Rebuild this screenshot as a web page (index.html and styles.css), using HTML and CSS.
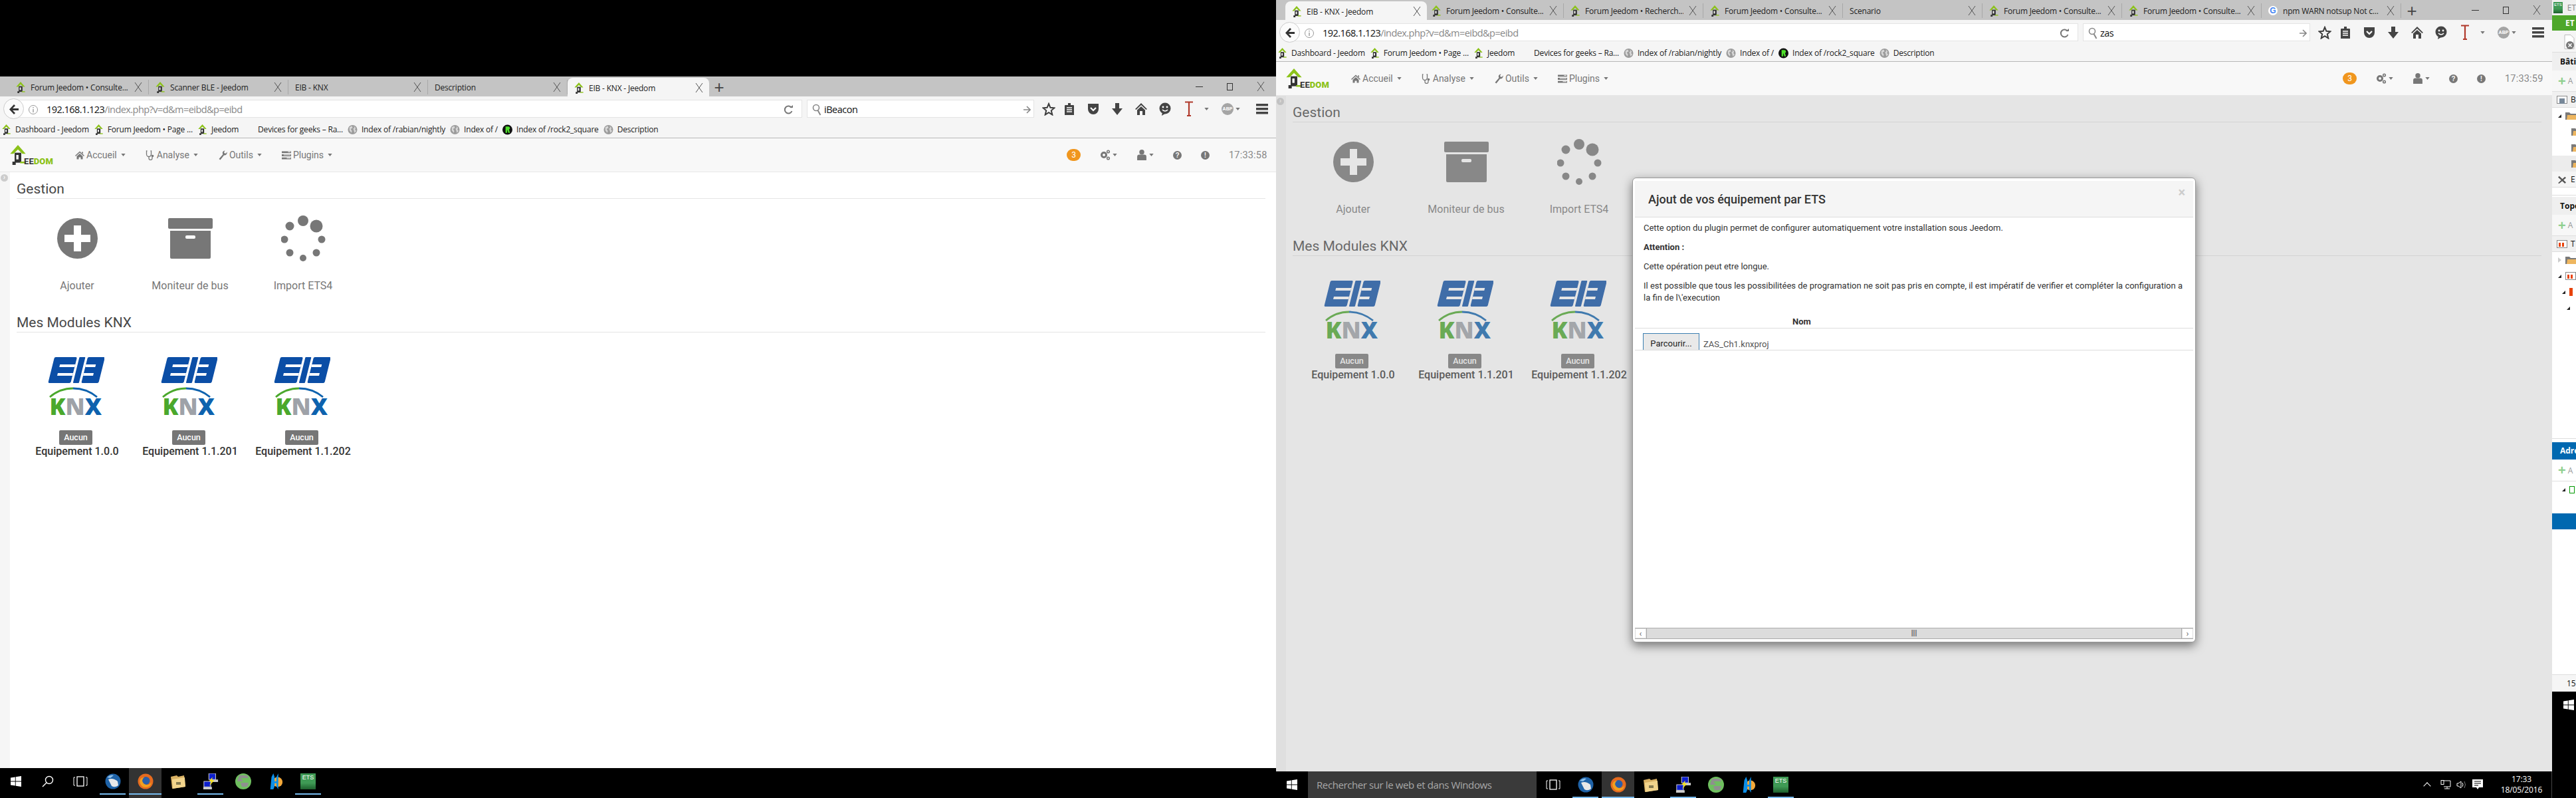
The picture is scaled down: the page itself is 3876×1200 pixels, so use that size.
FILE: index.html
```html
<!DOCTYPE html>
<html lang="fr">
<head>
<meta charset="utf-8">
<title>Jeedom EIB KNX</title>
<link rel="stylesheet" href="styles.css">
</head>
<body>
<svg class="sprite" aria-hidden="true">
  <symbol id="jee" viewBox="0 0 14 18"><path d="M4 7h6v9H4z" fill="#333"/><path d="M2 15h3v3H2z" fill="#333"/><path d="M7 0l7 8h-3L7 4 3 8H0z" fill="#8cc21a"/><path d="M5.500 9h2v4h-2z" fill="#fff"/><path d="M9 15h5v1.500H9z" fill="#8cc21a"/></symbol>
  <symbol id="x" viewBox="0 0 12 18"><path d="M1 2l10 14M11 2L1 16" stroke="#555" stroke-width="1" fill="none"/></symbol>
  <symbol id="globe" viewBox="0 0 16 16"><circle cx="8" cy="8" r="7.500" fill="#9c9c9c"/><path d="M3 4l4-2 1 3-3 2 2 3-1 3-3-4zM10 2l3 3-1 3 2 2-3 3-1-4-1-3 2-1z" fill="#d8d8d8"/></symbol>
  <symbol id="rock" viewBox="0 0 16 16"><circle cx="8" cy="8" r="8" fill="#111"/><path d="M5 3h4.500a2.500 2.500 0 0 1 1 4.800L12 13H9.500L8 8.500H7.500V13H5z" fill="#4ee02a"/></symbol>
  <symbol id="plus" viewBox="0 0 61 61"><circle cx="30.500" cy="30.500" r="30.500" fill="currentColor"/><path d="M25 11h11v14h14v11H36v14H25V36H11V25h14z" fill="#fff"/></symbol>
  <symbol id="box" viewBox="0 0 67 61"><rect width="67" height="16" rx="2" fill="currentColor"/><path d="M3 19h61v40a2 2 0 0 1-2 2H5a2 2 0 0 1-2-2z" fill="currentColor"/><rect x="26" y="26" width="15" height="5" rx="2" fill="#fff"/></symbol>
  <symbol id="spin" viewBox="0 0 67 69"><g fill="currentColor"><circle cx="33" cy="8" r="8"/><ellipse cx="53" cy="16" rx="9.500" ry="9.500"/><circle cx="13" cy="16" r="6.500"/><circle cx="5" cy="36" r="5.500"/><circle cx="61" cy="36" r="5.500"/><circle cx="13" cy="56" r="5.500"/><circle cx="53" cy="56" r="5.500"/><circle cx="33" cy="64" r="5"/></g></symbol>
  <symbol id="eib" viewBox="0 0 85 61">
    <g transform="translate(10 0) skewX(-14)">
      <rect width="34" height="39" rx="2" fill="#0b4ea6"/><rect x="11" y="11" width="23" height="4" fill="#fff"/><rect x="11" y="24" width="23" height="4" fill="#fff"/>
      <rect x="37.500" width="9" height="39" rx="1" fill="#0b4ea6"/>
      <rect x="50" width="26" height="39" rx="2" fill="#0b4ea6"/><rect x="50" y="11" width="15" height="4" fill="#fff"/><rect x="50" y="24" width="15" height="4" fill="#fff"/>
    </g>
    <path d="M3 60Q18 47 38 47" stroke="#4aa82c" stroke-width="2.800" fill="none"/>
    <path d="M38 47Q58 47 74 60" stroke="#0d62ae" stroke-width="2.800" fill="none"/>
  </symbol>
  <symbol id="nhome" viewBox="0 0 14 12"><path d="M7 0l7 6.500-1 1L7 2 1 7.500l-1-1zM2.500 7.500L7 3.500l4.500 4V12h-3V9h-3v3h-3zM10 1h2v3l-2-2z" fill="#777"/></symbol>
  <symbol id="nsteth" viewBox="0 0 13 15"><path d="M2 1H1v5a3.500 3.500 0 0 0 7 0V1H7M4.500 9.500V12a2.500 2.500 0 0 0 5 0v-2" stroke="#777" stroke-width="1.300" fill="none"/><circle cx="10" cy="8.500" r="1.800" fill="#777"/></symbol>
  <symbol id="nwrench" viewBox="0 0 13 15"><path d="M1 13l6-7a3.500 3.500 0 0 1 3-5.500L8.500 3l1 1.800 2.200-.3L13 2.500A4 4 0 0 1 8.500 7.500L3 14.500z" fill="#777"/></symbol>
  <symbol id="nlist" viewBox="0 0 15 15"><path d="M0 1h15v3H0zM0 6h15v3H0zM0 11h15v3H0z" fill="#777"/><path d="M10 2h4M3 7h11M8 12h6" stroke="#fff" stroke-width="1"/></symbol>
  <symbol id="ngears" viewBox="0 0 15 16"><circle cx="5.500" cy="8" r="3.500" fill="none" stroke="#777" stroke-width="3"/><circle cx="12" cy="3" r="1.800" fill="none" stroke="#777" stroke-width="1.600"/><circle cx="12" cy="13" r="1.800" fill="none" stroke="#777" stroke-width="1.600"/></symbol>
  <symbol id="nuser" viewBox="0 0 13 15"><circle cx="6.500" cy="3.500" r="3.500" fill="#777"/><path d="M0 15V10q0-3 3-3h7q3 0 3 3v5z" fill="#777"/></symbol>
  <symbol id="star" viewBox="0 0 20 20"><path d="M10 2l2.400 5.800 6.100.5-4.700 4 1.500 6.200L10 15.200l-5.300 3.300 1.500-6.200-4.700-4 6.100-.5z" fill="none" stroke="#3c3c3c" stroke-width="2"/></symbol>
  <symbol id="clip" viewBox="0 0 16 20"><path d="M2 4h4V1h4v3h4a1 1 0 0 1 1 1v14H1V5a1 1 0 0 1 1-1z" fill="#444"/><path d="M4 8h8M4 11h8M4 14h8" stroke="#fff" stroke-width="1.400"/></symbol>
  <symbol id="pocket" viewBox="0 0 18 18"><path d="M1 1h16v8a8 8 0 0 1-16 0z" fill="#444"/><path d="M5 7l4 4 4-4" stroke="#fff" stroke-width="2.200" fill="none"/></symbol>
  <symbol id="down" viewBox="0 0 16 18"><path d="M5 0h6v8h5l-8 10L0 8h5z" fill="#444"/></symbol>
  <symbol id="home" viewBox="0 0 18 18"><path d="M9 0l9 9-1.500 1L9 3 1.500 10 0 9z" fill="#444"/><path d="M9 5l6 5.500V18h-4v-6H7v6H3v-7.500z" fill="#444"/></symbol>
  <symbol id="smile" viewBox="0 0 18 20"><circle cx="9" cy="9" r="8.500" fill="#444"/><circle cx="6" cy="7" r="1.400" fill="#fff"/><circle cx="12" cy="7" r="1.400" fill="#fff"/><path d="M5 11q4 4 8 0" stroke="#fff" stroke-width="1.500" fill="none"/><path d="M5 15l-1 5 5-3z" fill="#444"/></symbol>
  <symbol id="tee" viewBox="0 0 14 24"><path d="M1 1.500h12M7 1v21M4 22h6" stroke="#b0392b" stroke-width="2.200" fill="none"/></symbol>
  <symbol id="caret" viewBox="0 0 8 5"><path d="M0 0h8L4 5z" fill="currentColor"/></symbol>
  <symbol id="burger" viewBox="0 0 18 16"><path d="M0 0h18v3.500H0zM0 6h18v3.500H0zM0 12h18v3.500H0z" fill="#444"/></symbol>
  <symbol id="back" viewBox="0 0 16 16"><path d="M8 1l2 2-4 4h9v3H6l4 4-2 2-7-7.500z" fill="#333"/></symbol>
  <symbol id="info" viewBox="0 0 14 16"><circle cx="7" cy="8" r="6.500" fill="none" stroke="#999"/><path d="M7 4v1.500M7 7v5" stroke="#999" stroke-width="1.400"/></symbol>
  <symbol id="reload" viewBox="0 0 14 16"><path d="M12 5a5.500 5.500 0 1 0 .5 5" stroke="#777" stroke-width="2" fill="none"/><path d="M9 5h5V1z" fill="#777"/></symbol>
  <symbol id="mag" viewBox="0 0 14 18"><circle cx="6" cy="6" r="4.500" fill="none" stroke="#888" stroke-width="1.600"/><path d="M8.500 10l4 7" stroke="#888" stroke-width="2"/></symbol>
  <symbol id="go" viewBox="0 0 12 14"><path d="M1 7h9M6 2l5 5-5 5" stroke="#888" stroke-width="1.600" fill="none"/></symbol>
  <symbol id="win" viewBox="0 0 16 16"><path d="M0 2.500l6.800-1v6H0zM7.700 1.300L16 0v7.500H7.700zM0 8.500h6.800v6l-6.800-1zM7.700 8.500H16V16l-8.300-1.300z" fill="#fff"/></symbol>
  <symbol id="lens" viewBox="0 0 18 18"><circle cx="11" cy="7" r="5.500" fill="none" stroke="#fff" stroke-width="1.400"/><path d="M7 11l-6 6" stroke="#fff" stroke-width="1.400"/></symbol>
  <symbol id="views" viewBox="0 0 22 16"><rect x="6" y="1" width="10" height="14" fill="none" stroke="#fff" stroke-width="1.300"/><path d="M3 2H1v12h2M19 2h2v12h-2" fill="none" stroke="#fff" stroke-width="1"/></symbol>
  <symbol id="tbird" viewBox="0 0 24 24"><circle cx="12" cy="12" r="11.500" fill="#1f63a8"/><path d="M5 9q7-3 14 3l1 6q-5 4-10 1z" fill="#e8e8e8"/><path d="M3 6q5-5 10-3l-5 4z" fill="#8fc0ea"/></symbol>
  <symbol id="fox" viewBox="0 0 24 24"><circle cx="12" cy="12" r="11.500" fill="#e66b1f"/><circle cx="12.500" cy="11" r="6" fill="#2a5ea8"/><path d="M3 12q2 9 9 9 8 0 9-8-3 5-8 4-5-1-6-6 0-3 3-5-6 0-7 6z" fill="#f0a020"/></symbol>
  <symbol id="folder" viewBox="0 0 24 22"><path d="M1 4l9-2 2 2 9-2 2 17-20 3z" fill="#d9b163"/><path d="M3 8l19-3 1 14-19 3z" fill="#f2d48c"/><rect x="9" y="12" width="7" height="4" fill="#857a50"/></symbol>
  <symbol id="putty" viewBox="0 0 24 26"><rect x="9" y="0" width="11" height="10" fill="#0d1fcc" stroke="#ddd"/><rect x="12" y="10" width="12" height="4" fill="#ccc"/><rect x="1" y="13" width="11" height="9" fill="#0d1fcc" stroke="#ddd"/><rect x="0" y="22" width="14" height="4" fill="#ccc"/><path d="M15 6l-6 7h4l-3 7 8-9h-4z" fill="#f4e11c"/></symbol>
  <symbol id="gworld" viewBox="0 0 24 24"><circle cx="12" cy="12" r="12" fill="#6fbf5f"/><path d="M6 3h12l2 4H8l4 5H3zM8 14h12l-2 6H10z" fill="#8f8f8f"/></symbol>
  <symbol id="hicon" viewBox="0 0 24 26"><circle cx="15" cy="14" r="8" fill="#f4a93a"/><path d="M3 26L5 6l3-6 2 6v7h3V6l3-6v26l-3-5v-5h-3v5l-2 5z" fill="#0d8fe8"/></symbol>
  <symbol id="net" viewBox="0 0 16 14"><path d="M5 1h10v9H5M10 10v3M6 13h8" fill="none" stroke="#fff"/><rect x="1" y="0.500" width="4" height="6" fill="#000" stroke="#fff"/></symbol>
  <symbol id="vol" viewBox="0 0 16 14"><path d="M1 5v4h2l4 3V2L3 5z" fill="none" stroke="#fff"/><path d="M9 4q2 3 0 6" fill="none" stroke="#fff"/><path d="M12 2q3 5 0 10" fill="none" stroke="#777"/></symbol>
  <symbol id="notif" viewBox="0 0 16 16"><path d="M0 0h16v12H10l-2 3-2-3H0z" fill="#fff"/><path d="M3 3h10M3 6h10M3 9h6" stroke="#000"/></symbol>
  <symbol id="doc" viewBox="0 0 16 22"><path d="M1 .500h9l5 5v16H1z" fill="#fff" stroke="#bbb"/><circle cx="9" cy="16" r="6" fill="#777"/><path d="M6.500 13.500l5 5M11.500 13.500l-5 5" stroke="#fff" stroke-width="1.500"/></symbol>
  <symbol id="fold" viewBox="0 0 16 12"><path d="M0 1h6l2 2h8v9H0z" fill="#7a7a7a"/><path d="M2 12l1-7h13v7z" fill="#eeb65f"/></symbol>
  <symbol id="bld" viewBox="0 0 16 12"><rect x=".5" y=".5" width="15" height="11" fill="#fff" stroke="#888"/><rect x="4" y="4" width="8" height="8" fill="#789"/></symbol>
  <symbol id="topo" viewBox="0 0 16 12"><rect x=".5" y=".5" width="15" height="11" fill="#fff" stroke="#888"/><rect x="3" y="4" width="3" height="6" fill="#e8430c"/><rect x="8" y="4" width="3" height="6" fill="#e8430c"/></symbol>
  <symbol id="tools" viewBox="0 0 16 14"><path d="M1 13L13 2l2 2L3 14zM1 3l2-2 12 11-2 2z" fill="#555"/></symbol>
</svg>

<main class="desktop">

  <!-- LEFT SCREEN -->
  <div class="screen screen-left">
    <section class="window">
      <div class="tabstrip">
        <div class="tab"><svg class="fav"><use href="#jee"/></svg><span class="tab-t">Forum Jeedom • Consulte...</span><svg class="tab-x"><use href="#x"/></svg></div>
        <div class="tab"><svg class="fav"><use href="#jee"/></svg><span class="tab-t">Scanner BLE - Jeedom</span><svg class="tab-x"><use href="#x"/></svg></div>
        <div class="tab"><span class="tab-t">EIB - KNX</span><svg class="tab-x"><use href="#x"/></svg></div>
        <div class="tab"><span class="tab-t">Description</span><svg class="tab-x"><use href="#x"/></svg></div>
        <div class="tab tab-on"><svg class="fav"><use href="#jee"/></svg><span class="tab-t">EIB - KNX - Jeedom</span><svg class="tab-x"><use href="#x"/></svg></div>
        <span class="tab-new">+</span>
        <div class="winctl"><span class="wc-min"></span><span class="wc-max"></span><svg class="wc-x"><use href="#x"/></svg></div>
      </div>
      <div class="toolbar">
        <span class="back"><svg class="i16"><use href="#back"/></svg></span>
        <div class="urlbar"><svg class="u-info"><use href="#info"/></svg><span class="u-host">192.168.1.123</span><span class="u-path">/index.php?v=d&amp;m=eibd&amp;p=eibd</span><svg class="u-reload"><use href="#reload"/></svg></div>
        <div class="searchbar"><svg class="s-mag"><use href="#mag"/></svg><span class="s-text">iBeacon</span><svg class="s-go"><use href="#go"/></svg></div>
        <span class="ti ti-star"><svg class="i20"><use href="#star"/></svg></span>
        <span class="ti ti-clip"><svg class="i20"><use href="#clip"/></svg></span>
        <span class="ti ti-36"><svg class="i18"><use href="#pocket"/></svg></span>
        <span class="ti ti-36"><svg class="i18"><use href="#down"/></svg></span>
        <span class="ti ti-36"><svg class="i18"><use href="#home"/></svg></span>
        <span class="ti ti-36"><svg class="i18h"><use href="#smile"/></svg></span>
        <span class="ti ti-36"><svg class="i24"><use href="#tee"/></svg></span>
        <span class="ti ti-drop"><svg class="car"><use href="#caret"/></svg></span>
        <span class="ti ti-abp"><span class="abp">ABP</span></span>
        <span class="ti ti-abpc"><svg class="car"><use href="#caret"/></svg></span>
        <span class="ti ti-menu"><svg class="i18"><use href="#burger"/></svg></span>
      </div>
      <div class="bookmarks">
        <span class="bm"><svg class="fav"><use href="#jee"/></svg>Dashboard - Jeedom</span>
        <span class="bm"><svg class="fav"><use href="#jee"/></svg>Forum Jeedom • Page ...</span>
        <span class="bm"><svg class="fav"><use href="#jee"/></svg>Jeedom</span>
        <span class="bm bm-noicon">Devices for geeks – Ra...</span>
        <span class="bm"><svg class="fav"><use href="#globe"/></svg>Index of /rabian/nightly</span>
        <span class="bm"><svg class="fav"><use href="#globe"/></svg>Index of /</span>
        <span class="bm"><svg class="fav"><use href="#rock"/></svg>Index of /rock2_square</span>
        <span class="bm"><svg class="fav"><use href="#globe"/></svg>Description</span>
      </div>
      <nav class="jnav">
        <div class="jlogo"><svg class="jhouse"><use href="#jee"/></svg><span class="jword">EE<b>DOM</b></span></div>
        <span class="ni"><svg class="ni-i"><use href="#nhome"/></svg>Accueil<svg class="car"><use href="#caret"/></svg></span>
        <span class="ni"><svg class="ni-i"><use href="#nsteth"/></svg>Analyse<svg class="car"><use href="#caret"/></svg></span>
        <span class="ni"><svg class="ni-i"><use href="#nwrench"/></svg>Outils<svg class="car"><use href="#caret"/></svg></span>
        <span class="ni"><svg class="ni-i"><use href="#nlist"/></svg>Plugins<svg class="car"><use href="#caret"/></svg></span>
        <div class="nright">
          <span class="nbadge">3</span>
          <span class="ni ni-s"><svg class="ni-i"><use href="#ngears"/></svg><svg class="car"><use href="#caret"/></svg></span>
          <span class="ni ni-s"><svg class="ni-i"><use href="#nuser"/></svg><svg class="car"><use href="#caret"/></svg></span>
          <span class="nround">?</span>
          <span class="nround">!</span>
          <span class="ntime">17:33:58</span>
        </div>
      </nav>
      <div class="content">
        <aside class="side"><span class="side-dot">›</span></aside>
        <div class="main">
          <h2 class="legend legend-1">Gestion</h2>
          <div class="cards cards-act">
            <div class="card"><div class="act-i"><svg class="ic-plus"><use href="#plus"/></svg></div><div class="act-l">Ajouter</div></div>
            <div class="card"><div class="act-i"><svg class="ic-box"><use href="#box"/></svg></div><div class="act-l">Moniteur de bus</div></div>
            <div class="card"><div class="act-i"><svg class="ic-spin"><use href="#spin"/></svg></div><div class="act-l">Import ETS4</div></div>
          </div>
          <h2 class="legend legend-2">Mes Modules KNX</h2>
          <div class="cards cards-eq">
            <div class="card"><svg class="ic-eib"><use href="#eib"/></svg><div class="knx"><span class="k1">K</span><span class="k2">N</span><span class="k3">X</span></div><span class="eq-b">Aucun</span><div class="eq-n">Equipement 1.0.0</div></div>
            <div class="card"><svg class="ic-eib"><use href="#eib"/></svg><div class="knx"><span class="k1">K</span><span class="k2">N</span><span class="k3">X</span></div><span class="eq-b">Aucun</span><div class="eq-n">Equipement 1.1.201</div></div>
            <div class="card"><svg class="ic-eib"><use href="#eib"/></svg><div class="knx"><span class="k1">K</span><span class="k2">N</span><span class="k3">X</span></div><span class="eq-b">Aucun</span><div class="eq-n">Equipement 1.1.202</div></div>
          </div>
        </div>
      </div>
    </section>
    <footer class="taskbar tb-left">
      <span class="slot slot-48"><svg class="i16"><use href="#win"/></svg></span>
      <span class="slot slot-48"><svg class="i18"><use href="#lens"/></svg></span>
      <span class="slot"><svg class="i22"><use href="#views"/></svg></span>
      <span class="slot slot-run"><svg class="i24"><use href="#tbird"/></svg></span>
      <span class="slot slot-run slot-on"><svg class="i24"><use href="#fox"/></svg></span>
      <span class="slot"><svg class="i24"><use href="#folder"/></svg></span>
      <span class="slot slot-run"><svg class="i24"><use href="#putty"/></svg></span>
      <span class="slot"><svg class="i24"><use href="#gworld"/></svg></span>
      <span class="slot"><svg class="i24"><use href="#hicon"/></svg></span>
      <span class="slot slot-run"><span class="ets-ic">ETS</span></span>
    </footer>
  </div>

  <!-- RIGHT SCREEN -->
  <div class="screen screen-right">
    <section class="window">
      <div class="tabstrip">
        <div class="tab tab-on"><svg class="fav"><use href="#jee"/></svg><span class="tab-t">EIB - KNX - Jeedom</span><svg class="tab-x"><use href="#x"/></svg></div>
        <div class="tab"><svg class="fav"><use href="#jee"/></svg><span class="tab-t">Forum Jeedom • Consulte...</span><svg class="tab-x"><use href="#x"/></svg></div>
        <div class="tab"><svg class="fav"><use href="#jee"/></svg><span class="tab-t">Forum Jeedom • Recherch...</span><svg class="tab-x"><use href="#x"/></svg></div>
        <div class="tab"><svg class="fav"><use href="#jee"/></svg><span class="tab-t">Forum Jeedom • Consulte...</span><svg class="tab-x"><use href="#x"/></svg></div>
        <div class="tab"><span class="tab-t">Scenario</span><svg class="tab-x"><use href="#x"/></svg></div>
        <div class="tab"><svg class="fav"><use href="#jee"/></svg><span class="tab-t">Forum Jeedom • Consulte...</span><svg class="tab-x"><use href="#x"/></svg></div>
        <div class="tab"><svg class="fav"><use href="#jee"/></svg><span class="tab-t">Forum Jeedom • Consulte...</span><svg class="tab-x"><use href="#x"/></svg></div>
        <div class="tab"><span class="gfav">G</span><span class="tab-t">npm WARN notsup Not c...</span><svg class="tab-x"><use href="#x"/></svg></div>
        <span class="tab-new">+</span>
        <div class="winctl"><span class="wc-min"></span><span class="wc-max"></span><svg class="wc-x"><use href="#x"/></svg></div>
      </div>
      <div class="toolbar">
        <span class="back"><svg class="i16"><use href="#back"/></svg></span>
        <div class="urlbar"><svg class="u-info"><use href="#info"/></svg><span class="u-host">192.168.1.123</span><span class="u-path">/index.php?v=d&amp;m=eibd&amp;p=eibd</span><svg class="u-reload"><use href="#reload"/></svg></div>
        <div class="searchbar"><svg class="s-mag"><use href="#mag"/></svg><span class="s-text">zas</span><svg class="s-go"><use href="#go"/></svg></div>
        <span class="ti ti-star"><svg class="i20"><use href="#star"/></svg></span>
        <span class="ti ti-clip"><svg class="i20"><use href="#clip"/></svg></span>
        <span class="ti ti-36"><svg class="i18"><use href="#pocket"/></svg></span>
        <span class="ti ti-36"><svg class="i18"><use href="#down"/></svg></span>
        <span class="ti ti-36"><svg class="i18"><use href="#home"/></svg></span>
        <span class="ti ti-36"><svg class="i18h"><use href="#smile"/></svg></span>
        <span class="ti ti-36"><svg class="i24"><use href="#tee"/></svg></span>
        <span class="ti ti-drop"><svg class="car"><use href="#caret"/></svg></span>
        <span class="ti ti-abp"><span class="abp">ABP</span></span>
        <span class="ti ti-abpc"><svg class="car"><use href="#caret"/></svg></span>
        <span class="ti ti-menu"><svg class="i18"><use href="#burger"/></svg></span>
      </div>
      <div class="bookmarks">
        <span class="bm"><svg class="fav"><use href="#jee"/></svg>Dashboard - Jeedom</span>
        <span class="bm"><svg class="fav"><use href="#jee"/></svg>Forum Jeedom • Page ...</span>
        <span class="bm"><svg class="fav"><use href="#jee"/></svg>Jeedom</span>
        <span class="bm bm-noicon">Devices for geeks – Ra...</span>
        <span class="bm"><svg class="fav"><use href="#globe"/></svg>Index of /rabian/nightly</span>
        <span class="bm"><svg class="fav"><use href="#globe"/></svg>Index of /</span>
        <span class="bm"><svg class="fav"><use href="#rock"/></svg>Index of /rock2_square</span>
        <span class="bm"><svg class="fav"><use href="#globe"/></svg>Description</span>
      </div>
      <nav class="jnav">
        <div class="jlogo"><svg class="jhouse"><use href="#jee"/></svg><span class="jword">EE<b>DOM</b></span></div>
        <span class="ni"><svg class="ni-i"><use href="#nhome"/></svg>Accueil<svg class="car"><use href="#caret"/></svg></span>
        <span class="ni"><svg class="ni-i"><use href="#nsteth"/></svg>Analyse<svg class="car"><use href="#caret"/></svg></span>
        <span class="ni"><svg class="ni-i"><use href="#nwrench"/></svg>Outils<svg class="car"><use href="#caret"/></svg></span>
        <span class="ni"><svg class="ni-i"><use href="#nlist"/></svg>Plugins<svg class="car"><use href="#caret"/></svg></span>
        <div class="nright">
          <span class="nbadge">3</span>
          <span class="ni ni-s"><svg class="ni-i"><use href="#ngears"/></svg><svg class="car"><use href="#caret"/></svg></span>
          <span class="ni ni-s"><svg class="ni-i"><use href="#nuser"/></svg><svg class="car"><use href="#caret"/></svg></span>
          <span class="nround">?</span>
          <span class="nround">!</span>
          <span class="ntime">17:33:59</span>
        </div>
      </nav>
      <div class="content">
        <aside class="side"><span class="side-dot">›</span></aside>
        <div class="main">
          <h2 class="legend legend-1">Gestion</h2>
          <div class="cards cards-act">
            <div class="card"><div class="act-i"><svg class="ic-plus"><use href="#plus"/></svg></div><div class="act-l">Ajouter</div></div>
            <div class="card"><div class="act-i"><svg class="ic-box"><use href="#box"/></svg></div><div class="act-l">Moniteur de bus</div></div>
            <div class="card"><div class="act-i"><svg class="ic-spin"><use href="#spin"/></svg></div><div class="act-l">Import ETS4</div></div>
          </div>
          <h2 class="legend legend-2">Mes Modules KNX</h2>
          <div class="cards cards-eq">
            <div class="card"><svg class="ic-eib"><use href="#eib"/></svg><div class="knx"><span class="k1">K</span><span class="k2">N</span><span class="k3">X</span></div><span class="eq-b">Aucun</span><div class="eq-n">Equipement 1.0.0</div></div>
            <div class="card"><svg class="ic-eib"><use href="#eib"/></svg><div class="knx"><span class="k1">K</span><span class="k2">N</span><span class="k3">X</span></div><span class="eq-b">Aucun</span><div class="eq-n">Equipement 1.1.201</div></div>
            <div class="card"><svg class="ic-eib"><use href="#eib"/></svg><div class="knx"><span class="k1">K</span><span class="k2">N</span><span class="k3">X</span></div><span class="eq-b">Aucun</span><div class="eq-n">Equipement 1.1.202</div></div>
          </div>
        </div>
        <div class="dim"></div>
      </div>
      <div class="modal">
        <header class="m-head"><h3 class="m-title">Ajout de vos équipement par ETS</h3><span class="m-close">×</span></header>
        <div class="m-body">
          <p class="m-p">Cette option du plugin permet de configurer automatiquement votre installation sous Jeedom.</p>
          <p class="m-p"><b>Attention :</b></p>
          <p class="m-p">Cette opération peut etre longue.</p>
          <p class="m-p">Il est possible que tous les possibilitées de programation ne soit pas pris en compte, il est impératif de verifier et compléter la configuration a la fin de l\'execution</p>
        </div>
        <div class="m-th"><span class="m-nom">Nom</span></div>
        <div class="m-row"><span class="m-file">Parcourir...</span><span class="m-fname">ZAS_Ch1.knxproj</span></div>
        <div class="m-fill"></div>
        <div class="m-scroll"><span class="m-sb">‹</span><span class="m-track">|||</span><span class="m-sb">›</span></div>
      </div>
    </section>
    <footer class="taskbar tb-right">
      <span class="slot slot-48"><svg class="i16"><use href="#win"/></svg></span>
      <span class="tsearch">Rechercher sur le web et dans Windows</span>
      <span class="slot"><svg class="i22"><use href="#views"/></svg></span>
      <span class="slot slot-run"><svg class="i24"><use href="#tbird"/></svg></span>
      <span class="slot slot-run slot-on"><svg class="i24"><use href="#fox"/></svg></span>
      <span class="slot"><svg class="i24"><use href="#folder"/></svg></span>
      <span class="slot slot-run"><svg class="i24"><use href="#putty"/></svg></span>
      <span class="slot"><svg class="i24"><use href="#gworld"/></svg></span>
      <span class="slot"><svg class="i24"><use href="#hicon"/></svg></span>
      <span class="slot slot-run"><span class="ets-ic">ETS</span></span>
      <div class="tray">
        <span class="tray-up"></span>
        <svg class="i16"><use href="#net"/></svg>
        <svg class="i16"><use href="#vol"/></svg>
        <svg class="i16"><use href="#notif"/></svg>
        <span class="clock">17:33<br>18/05/2016</span>
      </div>
    </footer>
  </div>

  <!-- THIRD SCREEN, CUT OFF -->
  <div class="screen screen-third">
    <section class="ets">
      <div class="et-title"><span class="ets-ic ets-ic-s">ETS</span><span>ET</span></div>
      <div class="et-green">ET</div>
      <div class="et-tool"><svg class="et-doc"><use href="#doc"/></svg></div>
      <div class="et-band">Bâti</div>
      <div class="et-add"><span class="et-plus">+</span><span>A</span></div>
      <div class="et-col"><svg class="et-i"><use href="#bld"/></svg><span>B</span></div>
      <div class="et-tree et-tree-1">
        <div class="et-node"><span class="et-arr"></span><svg class="et-f"><use href="#fold"/></svg></div>
        <div class="et-node et-n2"><svg class="et-f"><use href="#fold"/></svg></div>
        <div class="et-node et-n2"><svg class="et-f"><use href="#fold"/></svg></div>
        <div class="et-node et-n2 et-sel"><svg class="et-f"><use href="#fold"/></svg></div>
      </div>
      <div class="et-col et-col-e"><svg class="et-i"><use href="#tools"/></svg><span>E</span></div>
      <div class="et-gap"></div>
      <div class="et-band et-band-2">Topo</div>
      <div class="et-add"><span class="et-plus">+</span><span>A</span></div>
      <div class="et-col"><svg class="et-i"><use href="#topo"/></svg><span>T</span></div>
      <div class="et-tree et-tree-2">
        <div class="et-node"><span class="et-arr et-arr-o"></span><svg class="et-f"><use href="#fold"/></svg></div>
        <div class="et-node"><span class="et-arr"></span><svg class="et-f"><use href="#topo"/></svg></div>
        <div class="et-node et-n3"><span class="et-arr"></span><span class="et-bar"></span></div>
        <div class="et-node et-n4"><span class="et-arr"></span></div>
      </div>
      <div class="et-blue">Adre</div>
      <div class="et-add et-add-w"><span class="et-plus">+</span><span>A</span></div>
      <div class="et-tree et-tree-3"><div class="et-node et-n3"><span class="et-arr"></span><span class="et-grp"></span></div></div>
      <div class="et-blue et-blue-2"></div>
      <div class="et-rest"></div>
      <div class="et-status">15.</div>
    </section>
    <footer class="taskbar tb-third"><svg class="i16"><use href="#win"/></svg></footer>
  </div>
</main>
</body>
</html>
```

FILE: styles.css
```css
* { box-sizing: border-box; }
html, body { margin: 0; height: 100%; background: #000; overflow: hidden; }
.sprite { position: absolute; width: 0; height: 0; }
svg { display: block; flex: none; }

.desktop { display: flex; width: 3876px; height: 1200px; font-family: "Roboto", sans-serif; }
.screen { display: flex; flex-direction: column; flex: none; height: 1200px; }
.screen-left { width: 1920px; padding-top: 115px; }
.screen-right { width: 1920px; }
.screen-third { width: 36px; overflow: hidden; }

/* window */
.window { position: relative; flex: 1; display: flex; flex-direction: column; background: #fff; min-height: 0; }

/* tabs */
.tabstrip { display: flex; align-items: flex-end; height: 30px; padding-left: 14px; background: #c4c4c4; font: 12px "Open Sans", sans-serif; color: #222; }
.tab { display: flex; align-items: center; flex: none; width: 210px; height: 22px; margin-bottom: 3px; padding: 0 9px 0 10px; border-right: 1px solid #a8a8a8; gap: 8px; }
.tab-on { height: 28px; margin: 0 -1px 0 0; padding-top: 2px; width: 213px; background: #f5f5f5; border: 0; border-radius: 8px 8px 0 0; }
.tab-on + .tab { margin-left: -2px; width: 209px; }
.fav { width: 14px; height: 17px; }
.bm .fav { width: 15px; height: 16px; }
.tab-t { flex: 1; min-width: 0; white-space: nowrap; overflow: hidden; letter-spacing: -.2px; }
.tab-x { width: 12px; height: 18px; }
.gfav { display: block; flex: none; width: 14px; height: 14px; border-radius: 50%; background: #fff; color: #4285f4; font: bold 12px/14px "Liberation Sans", sans-serif; text-align: center; }
.tab-new { flex: none; width: 32px; height: 26px; font: 26px/24px "Liberation Sans", sans-serif; color: #444; text-align: center; }
.winctl { display: flex; align-items: center; margin-left: auto; height: 30px; padding-right: 17px; gap: 36px; }
.wc-min { width: 11px; height: 1px; background: #333; }
.wc-max { width: 9px; height: 11px; border: 1px solid #333; }
.wc-x { width: 12px; height: 18px; }

/* toolbar */
.toolbar { position: relative; display: flex; align-items: center; height: 33px; padding: 5px 3px 1px 5px; background: #f5f5f5; }
.back { position: relative; z-index: 1; display: flex; align-items: center; justify-content: center; flex: none; width: 31px; height: 31px; margin-right: -15px; border-radius: 50%; border: 1px solid #ccc; background: #fbfbfb; }
.i16 { width: 16px; height: 16px; }
.i18 { width: 18px; height: 18px; }
.i18h { width: 18px; height: 20px; }
.i20 { width: 20px; height: 20px; }
.i22 { width: 22px; height: 16px; }
.i24 { width: 24px; height: 24px; }
.urlbar { display: flex; align-items: center; flex: 1; height: 27px; padding: 2px 13px 0 21px; background: #fff; border: 1px solid #e4e4e4; font: 14.500px "Open Sans", sans-serif; letter-spacing: -.55px; }
.u-info { width: 14px; height: 16px; margin-right: 13px; }
.u-host { color: #111; }
.u-path { color: #888; }
.u-reload { width: 14px; height: 16px; margin-left: auto; }
.searchbar { display: flex; align-items: center; flex: none; width: 342px; height: 27px; margin-left: 7px; padding: 2px 4px 0 7px; background: #fff; border: 1px solid #e4e4e4; font: 14.500px "Open Sans", sans-serif; letter-spacing: -.5px; color: #111; }
.s-mag { width: 14px; height: 18px; margin-right: 4px; }
.s-go { width: 12px; height: 14px; margin-left: auto; }
.ti { display: flex; align-items: center; justify-content: center; flex: none; height: 28px; color: #444; }
.ti-star { width: 30px; margin-left: 7px; }
.ti-clip { width: 32px; }
.ti-36 { width: 36px; }
.ti-clip + .ti-36 { margin-left: 2px; }
.ti-drop { width: 16px; }
.ti-abp { width: 24px; margin-left: 12px; }
.ti-abpc { width: 7px; }
.ti-menu { width: 36px; margin-left: 15px; }
.abp { display: block; width: 18px; height: 18px; border-radius: 50%; background: #a5a5a5; color: #fff; font: bold 7px/18px "Liberation Sans", sans-serif; text-align: center; }
.car { width: 7px; height: 4px; color: #777; }

/* bookmarks */
.bookmarks { display: flex; align-items: center; gap: 7px; height: 30px; padding: 4px 0 0 2px; background: #f5f5f5; border-bottom: 1px solid #b8b8b8; font: 12px "Open Sans", sans-serif; color: #222; letter-spacing: -.2px; white-space: nowrap; }
.bm { display: flex; align-items: center; gap: 6px; }
.bm-noicon { margin-left: 22px; }

/* jeedom navbar */
.jnav { display: flex; align-items: center; gap: 30px; height: 51px; padding: 0 15px; background: #f8f8f8; border-bottom: 1px solid #e7e7e7; font-size: 14px; color: #777; }
.jlogo { display: flex; align-items: flex-end; width: 69px; height: 30px; margin-right: -1px; }
.jhouse { width: 24px; height: 30px; }
.jword { margin-left: -3px; font-weight: 700; font-size: 13px; line-height: 11px; color: #333; letter-spacing: .1px; }
.jword b { color: #8cc21a; }
.ni { display: inline-flex; align-items: center; gap: 3px; }
.ni .car { margin-left: 3px; }
.ni-i { width: 14px; height: 15px; }
.ni-s { gap: 0; }
.ni-s .ni-i { width: 16px; height: 16px; }
.nright { display: flex; align-items: center; gap: 29px; margin-left: auto; }
.nbadge { width: 21px; height: 18px; border-radius: 10px; background: #f0961e; color: #fff; font-size: 12px; line-height: 18px; text-align: center; }
.nround { width: 13px; height: 13px; border-radius: 50%; background: #777; color: #f8f8f8; font: bold 10px/13px "Liberation Sans", sans-serif; text-align: center; }
.ntime { width: 56px; font-size: 14.500px; letter-spacing: .2px; color: #888; text-align: right; white-space: nowrap; }

/* content */
.content { position: relative; flex: 1; display: flex; min-height: 0; }
.side { flex: none; width: 15px; background: #f6f6f6; }
.side-dot { display: block; width: 11px; height: 11px; margin: 3px 0 0 1px; border-radius: 50%; background: #ccc; color: #f6f6f6; font: bold 10px/10px "Liberation Sans", sans-serif; text-align: center; }
.main { flex: 1; padding: 0 16px 0 10px; color: #333; }
.legend { margin: 0; font-weight: 400; font-size: 21px; line-height: 25px; color: #484848; border-bottom: 1px solid #e5e5e5; }
.legend-1 { height: 40px; padding-top: 13px; }
.legend-2 { height: 58px; padding-top: 31px; }
.cards { display: flex; padding-left: 6px; }
.card { display: flex; flex-direction: column; align-items: center; flex: none; width: 170px; }
.cards-act { padding-top: 24px; color: #777; }
.act-i { display: flex; align-items: center; justify-content: center; width: 100%; height: 70px; }
.ic-plus { width: 61px; height: 61px; }
.ic-box { width: 67px; height: 61px; }
.ic-spin { width: 67px; height: 69px; }
.act-l { height: 24px; margin-top: 25px; font-size: 16px; line-height: 24px; color: #777; white-space: nowrap; }
.cards-eq { padding-top: 37px; }
.ic-eib { width: 85px; height: 61px; margin-left: -4px; }
.knx { display: flex; justify-content: space-between; width: 73px; height: 25px; margin-left: -10px; font: 800 35px/25px "Open Sans", sans-serif; }
.k1 { color: #4aa82c; }
.k2 { color: #9ea2a8; }
.k3 { color: #0d62ae; }
.eq-b { width: 50px; height: 22px; margin: 24px 0 0 -4px; border-radius: 2px; background: #767676; color: #fff; font-size: 12.500px; font-weight: 500; line-height: 22px; text-align: center; }
.eq-n { height: 20px; font-size: 16px; font-weight: 500; line-height: 20px; color: #333; white-space: nowrap; }
.dim { position: absolute; inset: 0; background: rgba(173,173,173,.32); }

/* modal */
.modal { position: absolute; top: 267px; left: 536px; display: flex; flex-direction: column; width: 848px; height: 699px; padding: 4px 3px 4px; background: #fff; border: 1px solid #999; border-radius: 6px; box-shadow: 0 5px 15px rgba(0,0,0,.5); font-size: 13px; color: #333; }
.m-head { display: flex; align-items: center; justify-content: space-between; flex: none; height: 55px; padding: 0 12px 0 20px; background: #f5f5f5; border-bottom: 1px solid #ddd; }
.m-title { margin: 0; font-size: 18px; font-weight: 500; color: #333; }
.m-close { margin-top: -20px; font-size: 20px; font-weight: 700; color: #ccc; }
.m-body { flex: none; height: 148px; padding: 7px 13px 0; line-height: 18px; }
.m-p { margin: 0 0 11px; }
.m-th { flex: none; height: 19px; border-bottom: 1px solid #ddd; font-weight: 700; line-height: 17px; }
.m-nom { display: block; width: 502px; text-align: center; }
.m-row { display: flex; align-items: flex-end; flex: none; height: 33px; padding-left: 12px; border-bottom: 1px solid #ddd; overflow: hidden; }
.m-file { flex: none; width: 85px; height: 25px; padding-top: 2px; background: #e9e9e9; border: 1px solid #3c7fb1; border-bottom: 0; line-height: 25px; text-align: center; color: #222; }
.m-fname { padding: 0 0 1px 6px; color: #555; }
.m-fill { flex: 1; }
.m-scroll { display: flex; flex: none; height: 17px; border: solid #aaa; border-width: 1px 0; }
.m-sb { flex: none; width: 17px; font-size: 13px; line-height: 14px; text-align: center; color: #666; border: 1px solid #ddd; }
.m-track { flex: 1; background: #dcdcdc; font: bold 10px/14px "Liberation Sans", sans-serif; text-align: center; color: #666; border: solid #aaa; border-width: 0 1px; }

/* taskbar */
.taskbar { display: flex; align-items: stretch; flex: none; background: #000; color: #fff; }
.tb-left { height: 45px; }
.tb-right { height: 40px; }
.tb-third { height: 160px; padding: 12px 0 0 17px; }
.slot { position: relative; display: flex; align-items: center; justify-content: center; flex: none; width: 49px; }
.slot-48 { width: 48px; }
.tb-left .slot { padding-bottom: 6px; }
.slot-on { background: #333; }
.slot-run::after { content: ""; position: absolute; left: 5px; right: 5px; bottom: 0; height: 2px; background: #76b9ed; }
.tb-left .slot-run::after { bottom: 5px; }
.slot-on::after { left: 0; right: 0; }
.ets-ic { display: block; width: 23px; height: 24px; background: linear-gradient(#3f9a55 60%, #1d5f2c); color: #fff; font: 9px/12px "Liberation Sans", sans-serif; text-align: center; }
.tsearch { flex: none; width: 344px; padding-left: 13px; background: #3a3a3a; color: #a8a8a8; font: 15px/40px "Open Sans", sans-serif; letter-spacing: -.4px; white-space: nowrap; overflow: hidden; }
.tray { display: flex; align-items: center; gap: 8px; margin-left: auto; padding-right: 5px; border-right: 1px solid #444; }
.tray-up { width: 8px; height: 8px; margin: 4px 8px 0 0; border: solid #fff; border-width: 1px 0 0 1px; transform: rotate(45deg); }
.clock { width: 80px; margin-left: 10px; font: 12px/16px "Open Sans", sans-serif; letter-spacing: -.1px; text-align: center; }

/* third window */
.ets { flex: 1; display: flex; flex-direction: column; min-height: 0; background: #fff; font: 12px "Open Sans", sans-serif; color: #111; white-space: nowrap; overflow: hidden; }
.et-title { display: flex; align-items: center; gap: 7px; flex: none; height: 23px; padding-left: 2px; background: #f0f0f0; color: #888; }
.ets-ic-s { width: 14px; height: 17px; font-size: 6px; line-height: 9px; }
.et-green { flex: none; height: 23px; padding-left: 20px; background: #4ea72a; color: #fff; font-weight: 700; line-height: 23px; }
.et-tool { flex: none; height: 33px; padding: 6px 0 0 18px; background: #f5f5f5; border-bottom: 1px solid #ddd; }
.et-doc { width: 16px; height: 22px; }
.et-band { flex: none; height: 27px; padding-left: 12px; background: #efefef; font-weight: 700; line-height: 27px; }
.et-band-2 { margin-top: 2px; }
.et-add { display: flex; align-items: center; gap: 3px; flex: none; height: 32px; padding-left: 9px; background: #f7f7f7; color: #999; border-bottom: 1px solid #e0e0e0; }
.et-add-w { height: 33px; background: #fff; }
.et-plus { font: bold 20px/20px "Liberation Sans", sans-serif; color: #8fcf8f; }
.et-col { display: flex; align-items: center; gap: 5px; flex: none; height: 24px; padding-left: 7px; background: #f0f0f0; border-bottom: 1px solid #ddd; }
.et-i { width: 16px; height: 12px; }
.et-tree { flex: none; background: #fff; }
.et-tree-1 { height: 96px; }
.et-tree-2 { height: 281px; padding-bottom: 2px; border-bottom: 1px solid #ddd; }
.et-tree-3 { height: 48px; }
.et-node { display: flex; align-items: center; height: 24px; padding-left: 9px; gap: 6px; }
.et-n2 { padding-left: 29px; }
.et-n3 { padding-left: 15px; }
.et-n4 { padding-left: 22px; }
.et-sel { background: #ececec; }
.et-f { width: 16px; height: 12px; }
.et-arr { flex: none; width: 0; height: 0; border-style: solid; border-width: 0 0 5px 5px; border-color: transparent transparent #222 transparent; }
.et-arr-o { border-width: 4px 0 4px 5px; border-color: transparent transparent transparent #ccc; }
.et-bar { width: 5px; height: 12px; background: #e8430c; }
.et-grp { width: 8px; height: 11px; border: 1px solid #090; }
.et-col-e { background: #f5f5f5; }
.et-gap { flex: none; height: 12px; border-bottom: 1px solid #ddd; }
.et-blue { flex: none; height: 26px; margin-top: 5px; padding-left: 12px; background: #0068b0; color: #fff; font-weight: 700; line-height: 26px; }
.et-blue-2 { height: 24px; margin-top: 0; }
.et-rest { flex: 1; border-bottom: 1px solid #ddd; }
.et-status { flex: none; height: 25px; padding-left: 22px; background: #f5f5f5; line-height: 25px; }
```
